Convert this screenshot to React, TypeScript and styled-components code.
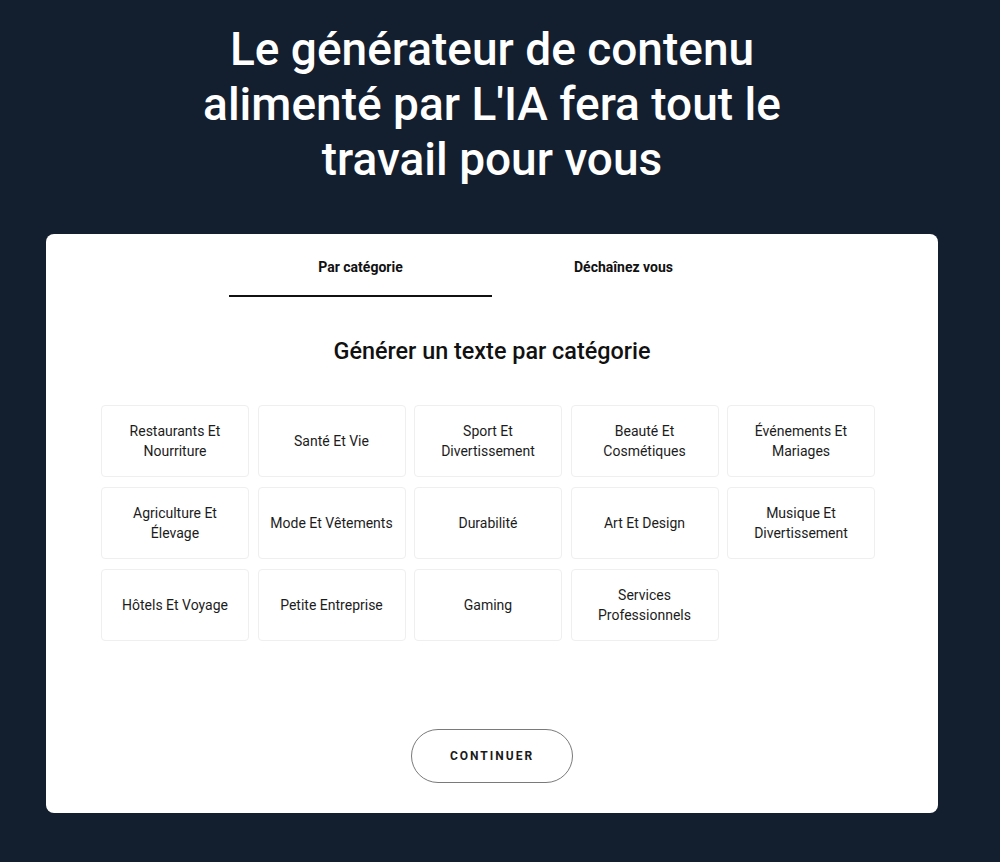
import React, { useState } from "react";
import styled, { createGlobalStyle } from "styled-components";

const Global = createGlobalStyle`
  html, body { margin: 0; padding: 0; background: #131e2e; }
  body { font-family: Roboto, "Liberation Sans", Arial, sans-serif; }
  * { box-sizing: border-box; }
`;

const Page = styled.div`
  min-height: 862px;
  background: #131e2e;
  padding: 22px 62px 49px 46px;
  display: flex;
  flex-direction: column;
  align-items: center;
`;

const Title = styled.h1`
  margin: 0;
  width: 700px;
  color: #ffffff;
  font-family: Roboto, "Liberation Sans", Arial, sans-serif;
  font-weight: 500;
  font-size: 46px;
  line-height: 55px;
  text-align: center;
`;

const Card = styled.section`
  margin-top: 47px;
  width: 892px;
  background: #ffffff;
  border-radius: 8px;
  padding: 0 0 30px;
  display: flex;
  flex-direction: column;
  align-items: center;
`;

const Tabs = styled.div`
  display: flex;
  width: 526px;
`;

const Tab = styled.button<{ $active?: boolean }>`
  flex: 1;
  background: none;
  border: none;
  border-bottom: 2px solid ${(p) => (p.$active ? "#111" : "transparent")};
  padding: 23px 0 18px;
  font-family: Roboto, "Liberation Sans", Arial, sans-serif;
  font-weight: 700;
  font-size: 14px;
  line-height: 20px;
  color: #111;
  cursor: pointer;
`;

const Subtitle = styled.h2`
  margin: 39px 0 0;
  font-family: Roboto, "Liberation Sans", Arial, sans-serif;
  font-weight: 500;
  font-size: 23.4px;
  line-height: 30px;
  color: #111;
`;

const Grid = styled.div`
  margin-top: 39px;
  width: 774px;
  display: grid;
  grid-template-columns: repeat(5, 1fr);
  column-gap: 8.5px;
  row-gap: 10px;
  transform: translateX(-4px);
`;

const Tile = styled.button`
  height: 72px;
  background: #fff;
  border: 1px solid #efefef;
  border-radius: 4px;
  padding: 0 10px;
  display: flex;
  align-items: center;
  justify-content: center;
  text-align: center;
  font-family: Roboto, "Liberation Sans", Arial, sans-serif;
  font-size: 14px;
  line-height: 20px;
  color: #1c1c1c;
  cursor: pointer;
`;

const Continue = styled.button`
  margin-top: 88px;
  width: 162px;
  height: 54px;
  border-radius: 27px;
  border: 1px solid #7a7a7a;
  background: #fff;
  font-family: Roboto, "Liberation Sans", Arial, sans-serif;
  font-weight: 700;
  font-size: 12px;
  letter-spacing: 2px;
  color: #1a1a1a;
  cursor: pointer;
`;

const categories: string[][] = [
  ["Restaurants Et", "Nourriture"],
  ["Santé Et Vie"],
  ["Sport Et", "Divertissement"],
  ["Beauté Et", "Cosmétiques"],
  ["Événements Et", "Mariages"],
  ["Agriculture Et", "Élevage"],
  ["Mode Et Vêtements"],
  ["Durabilité"],
  ["Art Et Design"],
  ["Musique Et", "Divertissement"],
  ["Hôtels Et Voyage"],
  ["Petite Entreprise"],
  ["Gaming"],
  ["Services", "Professionnels"],
];

export default function App() {
  const [tab, setTab] = useState(0);
  return (
    <>
      <Global />
      <Page>
        <Title>
          Le générateur de contenu
          <br />
          alimenté par L'IA fera tout le
          <br />
          travail pour vous
        </Title>
        <Card>
          <Tabs>
            <Tab $active={tab === 0} onClick={() => setTab(0)}>
              Par catégorie
            </Tab>
            <Tab $active={tab === 1} onClick={() => setTab(1)}>
              Déchaînez vous
            </Tab>
          </Tabs>
          <Subtitle>Générer un texte par catégorie</Subtitle>
          <Grid>
            {categories.map((lines, i) => (
              <Tile key={i}>
                <span>
                  {lines.map((l, j) => (
                    <React.Fragment key={j}>
                      {j > 0 && <br />}
                      {l}
                    </React.Fragment>
                  ))}
                </span>
              </Tile>
            ))}
          </Grid>
          <Continue>CONTINUER</Continue>
        </Card>
      </Page>
    </>
  );
}
